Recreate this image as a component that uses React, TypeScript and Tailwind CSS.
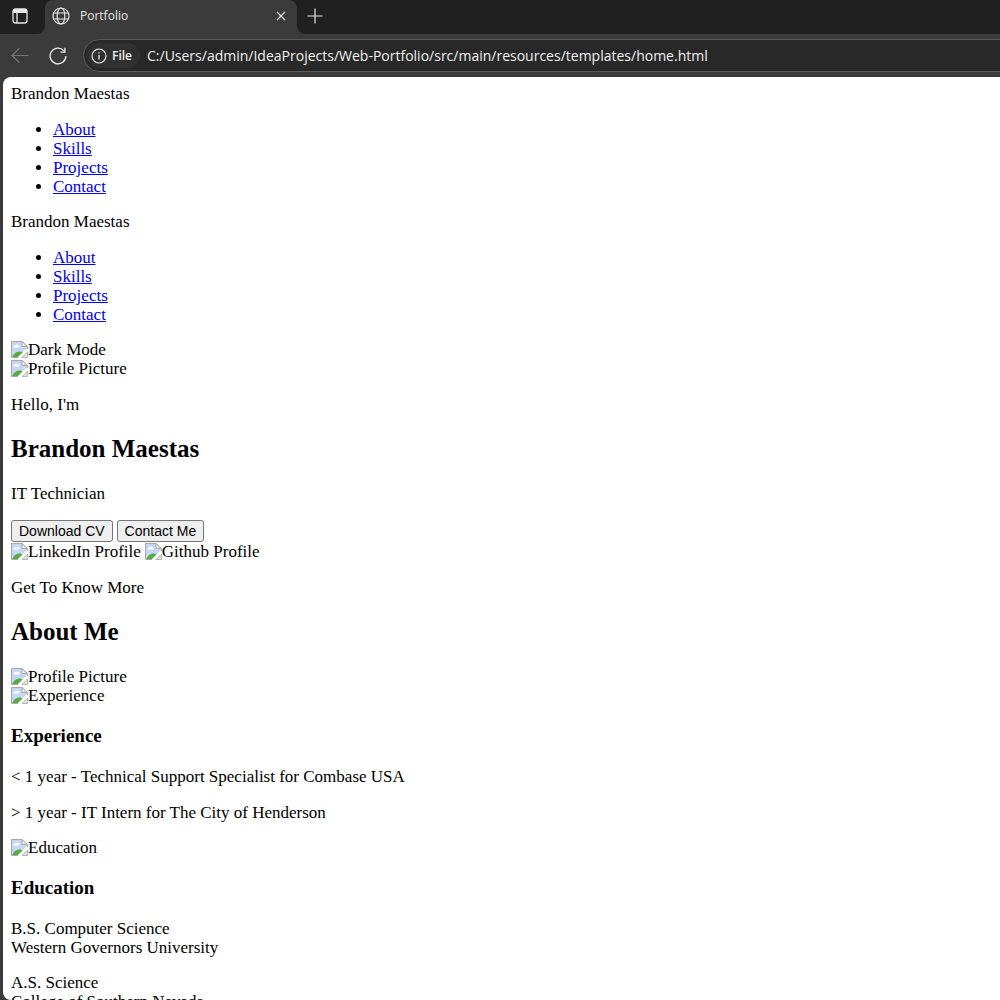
import type { ReactNode } from "react";

const links = ["About", "Skills", "Projects", "Contact"];

function BrokenImage({ alt }: { alt: string }) {
  return (
    <span className="inline-flex h-[19px] items-center align-top">
      <svg className="h-[17px] w-[17px] shrink-0" viewBox="0 0 17 17" aria-hidden="true">
        <path d="M.5.5H11l5 5v3L8 16.500H.5Z" fill="#c6d6f6" />
        <path d="M2.500 6.500a1.500 1.500 0 0 1 1.500-2 2 2 0 0 1 3.500 0 1.200 1.200 0 0 1 1 2Z" fill="#fff" />
        <path d="M1 16.500c1.500-3.500 4-6 7-6 2.200 0 3.200.5 4 1.500l-4.500 4.500Z" fill="#56ad3c" />
        <path d="M16.500 8 7.500 17" stroke="#fff" strokeWidth="2.200" />
        <path d="M16.500 8V5.500L11 .5H.5v16H7" fill="none" stroke="#a8a8a8" />
        <path d="M11 .5v5h5Z" fill="#f8f8f8" stroke="#a8a8a8" />
        <path d="M16.500 11v5.500H11Z" fill="#d8ecd2" stroke="#a8a8a8" strokeWidth=".8" />
      </svg>
      <span>{alt}</span>
    </span>
  );
}

function Nav() {
  return (
    <nav>
      <div>Brandon Maestas</div>
      <ul className="my-4 list-disc pl-[42px] pt-px">
        {links.map((link) => (
          <li key={link}>
            <a href={"#" + link.toLowerCase()} className="text-[#0000ee] underline">
              {link}
            </a>
          </li>
        ))}
      </ul>
    </nav>
  );
}

function Heading({ children }: { children: ReactNode }) {
  return <h2 className="my-5 text-[25px] leading-[30px] font-bold">{children}</h2>;
}

function SubHeading({ children }: { children: ReactNode }) {
  return <h3 className="my-5 text-[19px] leading-[22px] font-bold">{children}</h3>;
}

function PlainButton({ children }: { children: ReactNode }) {
  return (
    <button
      type="button"
      className="h-[22px] rounded-[3px] border border-[#767676] bg-[#efefef] px-[7px] font-['Liberation_Sans',Arial,sans-serif] text-[14px] leading-5"
    >
      {children}
    </button>
  );
}

function TabStrip() {
  return (
    <div className="flex h-[34px] shrink-0 bg-[#202020] text-[#e8e8e8]">
      <div className="w-[45px] bg-[#3b3b3b]">
        <div className="h-full rounded-br-lg bg-[#202020]">
          <button type="button" aria-label="Tab actions" className="flex h-8 w-10 items-center justify-center">
            <svg className="h-4 w-4" viewBox="0 0 16 16" fill="none" aria-hidden="true">
              <rect x="1" y="1" width="14" height="14" rx="2.500" stroke="currentColor" strokeWidth="1.300" />
              <path d="M1 5V3.500A2.500 2.500 0 0 1 3.500 1h9A2.500 2.500 0 0 1 15 3.500V5Z" fill="currentColor" />
              <path d="M5 5v10" stroke="currentColor" strokeWidth="1.300" />
            </svg>
          </button>
        </div>
      </div>
      <div className="flex w-[252px] items-center rounded-t-lg bg-[#3b3b3b] pb-0.5 pl-[7px] pr-2">
        <svg className="h-[18px] w-[18px]" viewBox="0 0 18 18" fill="none" stroke="currentColor" strokeWidth="1.200" aria-hidden="true">
          <circle cx="9" cy="9" r="8" />
          <ellipse cx="9" cy="9" rx="3.800" ry="8" />
          <path d="M1.700 6h14.600M1.700 12h14.600" />
        </svg>
        <span className="flex-1 pl-[10px] text-[12px] leading-4">Portfolio</span>
        <button type="button" aria-label="Close tab" className="flex h-4 w-4 items-center justify-center">
          <svg className="h-[10px] w-[10px]" viewBox="0 0 10 10" stroke="currentColor" strokeWidth="1.200" aria-hidden="true">
            <path d="m1 1 8 8M9 1 1 9" />
          </svg>
        </button>
      </div>
      <div className="flex-1 bg-[#3b3b3b]">
        <div className="h-full rounded-bl-lg bg-[#202020]">
          <button type="button" aria-label="New tab" className="flex h-8 w-9 items-center justify-center">
            <svg className="h-4 w-4" viewBox="0 0 16 16" stroke="currentColor" strokeWidth="1.200" aria-hidden="true">
              <path d="M8 .5v15M.5 8h15" />
            </svg>
          </button>
        </div>
      </div>
    </div>
  );
}

function Toolbar() {
  return (
    <div className="flex h-[43px] shrink-0 items-center overflow-hidden pl-[11px] text-[#f0f0f0]">
      <button type="button" aria-label="Back" className="text-[#757575]">
        <svg className="h-[17px] w-[18px]" viewBox="0 0 18 17" fill="none" stroke="currentColor" strokeWidth="1.200" aria-hidden="true">
          <path d="M17.500 8.500H1M8.500 1.200 1 8.500l7.500 7.300" />
        </svg>
      </button>
      <button type="button" aria-label="Refresh" className="ml-5">
        <svg className="h-[18px] w-[18px]" viewBox="0 0 18 18" fill="none" stroke="currentColor" strokeWidth="1.300" aria-hidden="true">
          <path d="M14.800 3.600A7.900 7.900 0 1 0 16.900 9M15.900 .8v4.400H11.500" />
        </svg>
      </button>
      <div className="ml-4 -mr-5 flex h-[33px] flex-1 items-center rounded-full border border-[#5a5a5a] bg-[#282828] pl-[3px]">
        <button type="button" className="flex h-[25px] items-center rounded-full bg-[#303030] pl-1 pr-2 text-[12px] leading-4 font-semibold">
          <svg className="mr-[5px] h-4 w-4" viewBox="0 0 16 16" fill="none" stroke="currentColor" strokeWidth="1.100" aria-hidden="true">
            <circle cx="8" cy="8" r="7" />
            <path d="M8 7v4.500M8 4.200v1.300" strokeWidth="1.300" />
          </svg>
          File
        </button>
        <input
          type="text"
          aria-label="Address"
          defaultValue="C:/Users/admin/IdeaProjects/Web-Portfolio/src/main/resources/templates/home.html"
          className="ml-[7px] min-w-0 flex-1 bg-transparent text-[14px] leading-5 outline-none"
        />
      </div>
    </div>
  );
}

export default function App() {
  return (
    <div className="flex h-screen flex-col overflow-hidden bg-[#3b3b3b] font-['Open_Sans','Segoe_UI',sans-serif]">
      <TabStrip />
      <Toolbar />
      <main className="ml-[3px] min-h-0 flex-1 overflow-y-auto rounded-l-lg bg-white px-2 py-[7px] font-['Liberation_Serif','Times_New_Roman',serif] text-[17px] leading-[19px] text-black [scrollbar-width:none]">
        <Nav />
        <Nav />
        <section id="profile">
          <div>
            <BrokenImage alt="Dark Mode" />
          </div>
          <div>
            <BrokenImage alt="Profile Picture" />
          </div>
          <p className="my-[17px]">Hello, I'm</p>
          <Heading>Brandon Maestas</Heading>
          <p className="my-[17px]">IT Technician</p>
          <div className="flex gap-1">
            <PlainButton>Download CV</PlainButton>
            <PlainButton>Contact Me</PlainButton>
          </div>
          <div className="flex gap-1">
            <BrokenImage alt="LinkedIn Profile" />
            <BrokenImage alt="Github Profile" />
          </div>
        </section>
        <section id="about">
          <p className="my-[17px]">Get To Know More</p>
          <Heading>About Me</Heading>
          <div>
            <BrokenImage alt="Profile Picture" />
          </div>
          <div>
            <BrokenImage alt="Experience" />
          </div>
          <SubHeading>Experience</SubHeading>
          <p className="my-[17px]">&lt; 1 year - Technical Support Specialist for Combase USA</p>
          <p className="my-4">&gt; 1 year - IT Intern for The City of Henderson</p>
          <div>
            <BrokenImage alt="Education" />
          </div>
          <SubHeading>Education</SubHeading>
          <p className="my-4">
            B.S. Computer Science
            <br />
            Western Governors University
          </p>
          <p className="my-4">
            A.S. Science
            <br />
            College of Southern Nevada
          </p>
        </section>
      </main>
    </div>
  );
}
